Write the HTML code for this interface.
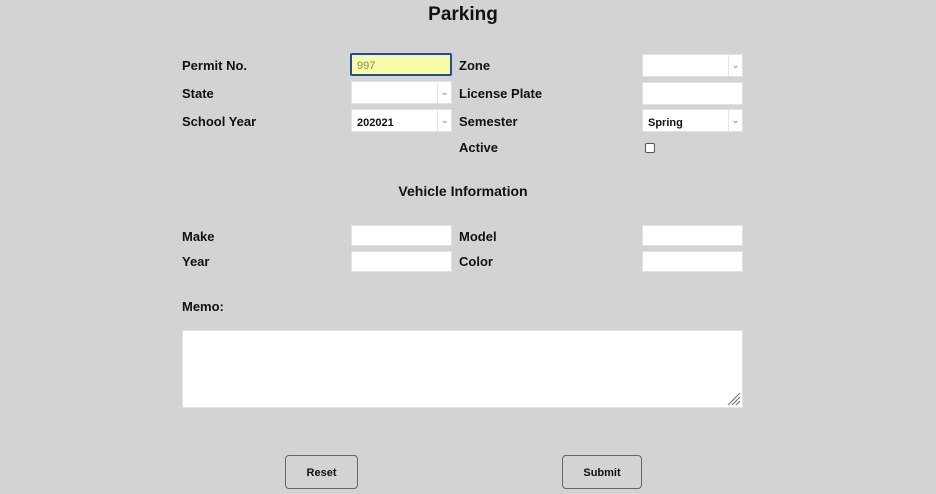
<!DOCTYPE html>
<html><head><meta charset="utf-8"><style>
*{margin:0;padding:0;box-sizing:border-box}
body{width:936px;height:494px;background:#d3d3d3;position:relative;overflow:hidden;font-family:"Liberation Sans",sans-serif;color:#111}
.a{position:absolute}
.l{position:absolute;font-weight:bold;font-size:13px;line-height:16px}
.box{position:absolute;background:#fff;border:1px solid #e2e2e2}
.sel{position:absolute;background:#fff;border:1px solid #e2e2e2;font-size:11px;font-weight:bold}
.sel .d{position:absolute;right:0;top:0;bottom:0;width:14px;border-left:1px solid #e6e6e6;color:#aaa;font-size:9px;text-align:center;line-height:20px}
.sel .t{position:absolute;left:5px;top:7px}
.btn{position:absolute;border:1px solid #666;border-radius:4px;font-size:11px;font-weight:bold;text-align:center;line-height:34px}
</style></head><body>
<div class="a" style="left:0;width:926px;top:4px;text-align:center;font-weight:bold;font-size:19px;line-height:22px">Parking</div>

<div class="l" style="left:182px;top:58px">Permit No.</div>
<div class="l" style="left:182px;top:86px">State</div>
<div class="l" style="left:182px;top:114px">School Year</div>

<div class="a" style="left:350px;top:53px;width:102px;height:23px;background:#f8fca8;border:2px solid #1d4f91;border-radius:2px;color:#8a8a55;font-size:11px;padding:5px 0 0 5px">997</div>
<div class="sel" style="left:351px;top:81px;width:101px;height:23px"><span class="d">⌄</span></div>
<div class="sel" style="left:351px;top:109px;width:101px;height:23px"><span class="t">202021</span><span class="d">⌄</span></div>

<div class="l" style="left:459px;top:58px">Zone</div>
<div class="l" style="left:459px;top:86px">License Plate</div>
<div class="l" style="left:459px;top:114px">Semester</div>
<div class="l" style="left:459px;top:140px">Active</div>

<div class="sel" style="left:642px;top:54px;width:101px;height:23px"><span class="d">⌄</span></div>
<div class="box" style="left:642px;top:82px;width:101px;height:23px"></div>
<div class="sel" style="left:642px;top:109px;width:101px;height:23px"><span class="t">Spring</span><span class="d">⌄</span></div>
<div class="a" style="left:645px;top:143px;width:10px;height:10px;background:#fff;border:1px solid #555;border-radius:2px"></div>

<div class="a" style="left:0;width:926px;top:183px;text-align:center;font-weight:bold;font-size:14px;line-height:16px">Vehicle Information</div>

<div class="l" style="left:182px;top:229px">Make</div>
<div class="l" style="left:182px;top:254px">Year</div>
<div class="box" style="left:351px;top:225px;width:101px;height:21px"></div>
<div class="box" style="left:351px;top:251px;width:101px;height:21px"></div>
<div class="l" style="left:459px;top:229px">Model</div>
<div class="l" style="left:459px;top:254px">Color</div>
<div class="box" style="left:642px;top:225px;width:101px;height:21px"></div>
<div class="box" style="left:642px;top:251px;width:101px;height:21px"></div>

<div class="l" style="left:182px;top:299px">Memo:</div>
<div class="box" style="left:182px;top:330px;width:561px;height:78px">
<svg style="position:absolute;right:1px;bottom:1px" width="14" height="14"><path d="M13 1L1 13M13 5L5 13M13 9L9 13" stroke="#777" stroke-width="1.2"/></svg>
</div>

<div class="btn" style="left:285px;top:455px;width:73px;height:34px">Reset</div>
<div class="btn" style="left:562px;top:455px;width:80px;height:34px">Submit</div>
</body></html>
